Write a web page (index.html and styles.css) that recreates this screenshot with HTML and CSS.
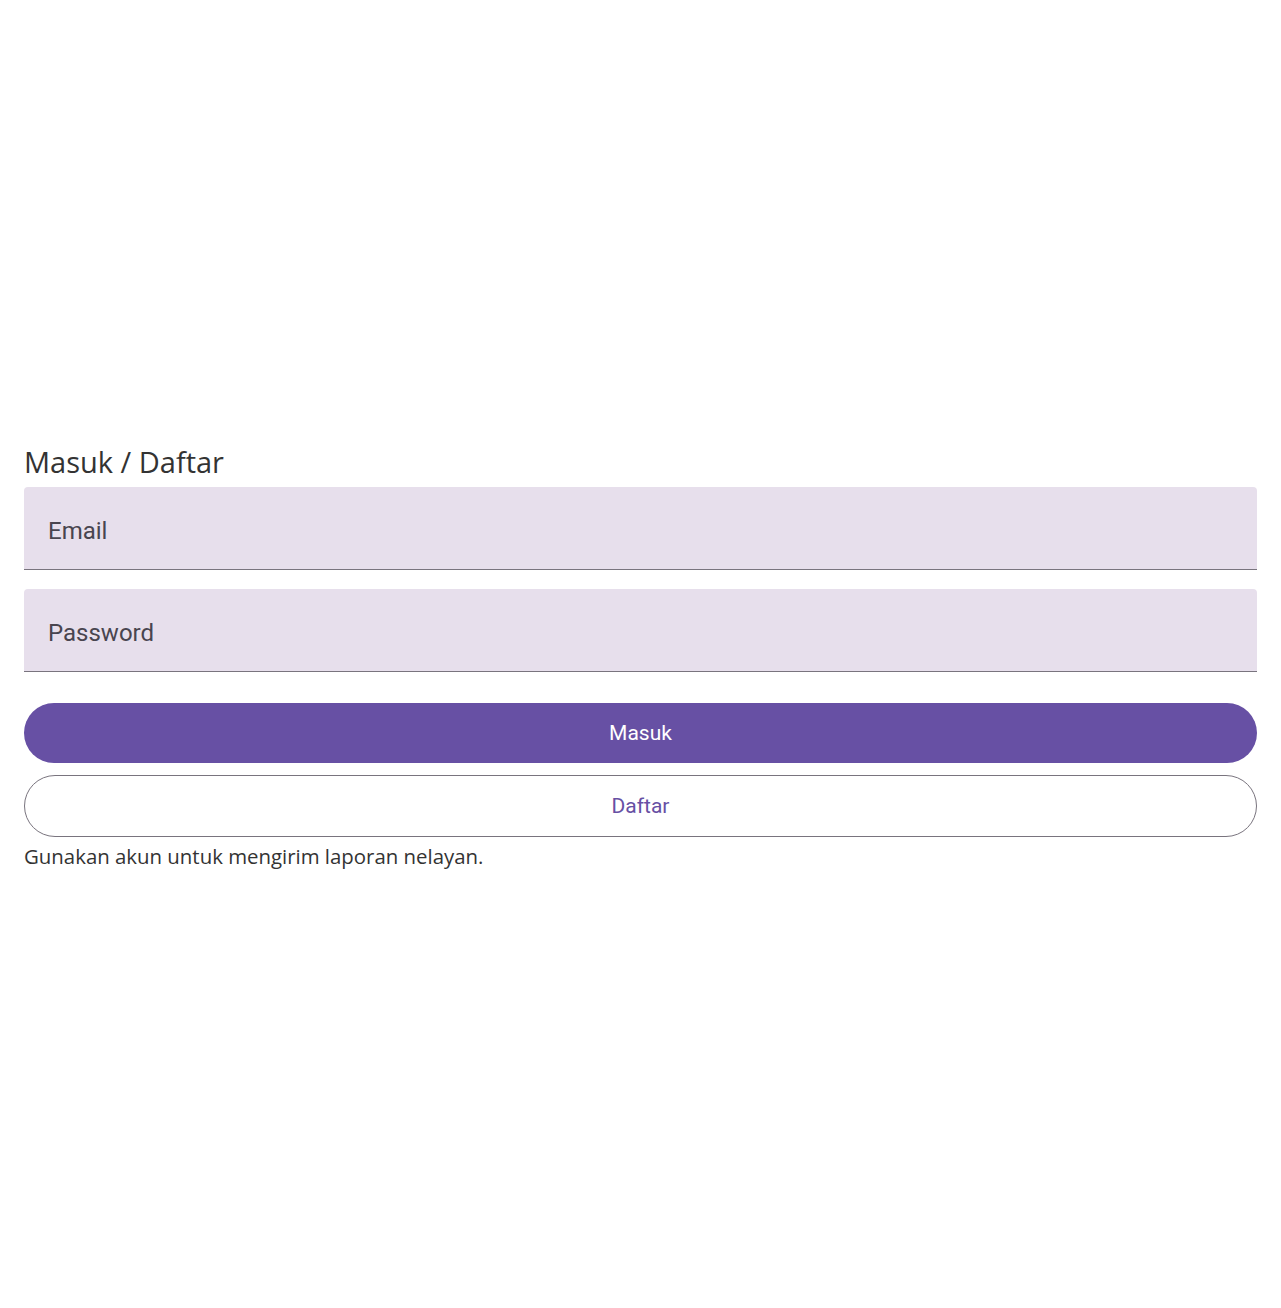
FILE: index.html
```html
<!DOCTYPE html>
<html lang="id">
<head>
<meta charset="utf-8">
<title>Masuk / Daftar</title>
<link rel="stylesheet" href="styles.css">
</head>
<body>
<main class="page">
  <section class="auth">
    <h1 class="title">Masuk / Daftar</h1>
    <div class="field"><span class="label">Email</span></div>
    <div class="field field-gap"><span class="label">Password</span></div>
    <button class="btn btn-filled">Masuk</button>
    <button class="btn btn-outline">Daftar</button>
    <p class="note">Gunakan akun untuk mengirim laporan nelayan.</p>
  </section>
</main>
</body>
</html>
```
FILE: styles.css
```css
html, body {
  margin: 0;
  padding: 0;
  background: #ffffff;
}
.page {
  min-height: 1308px;
  box-sizing: border-box;
  padding: 443px 24px 0 24px;
}
.auth {
  display: flex;
  flex-direction: column;
}
.title {
  margin: 0 0 6px 0;
  font-family: "Open Sans", "Noto Sans", sans-serif;
  font-weight: 400;
  font-size: 29px;
  line-height: 38px;
  color: #333333;
}
.field {
  height: 82px;
  background: #e7dfec;
  border-bottom: 1px solid #79747e;
  border-radius: 4px 4px 0 0;
  display: flex;
  align-items: center;
  padding: 0 24px;
  box-sizing: content-box;
}
.field-gap {
  margin-top: 19px;
}
.label {
  font-family: Roboto, sans-serif;
  font-size: 24px;
  color: #49454f;
  margin-top: 6px;
}
.btn {
  display: block;
  width: 100%;
  font-family: Roboto, sans-serif;
  font-size: 21px;
  border-radius: 999px;
  cursor: pointer;
}
.btn-filled {
  margin-top: 31px;
  height: 60px;
  background: #6750a4;
  color: #ffffff;
  border: none;
}
.btn-outline {
  margin-top: 12px;
  height: 62px;
  background: #ffffff;
  color: #6750a4;
  border: 1px solid #79747e;
}
.note {
  margin: 6px 0 0 0;
  font-family: "Open Sans", "Noto Sans", sans-serif;
  font-size: 20.4px;
  line-height: 26px;
  color: #333333;
}
```
